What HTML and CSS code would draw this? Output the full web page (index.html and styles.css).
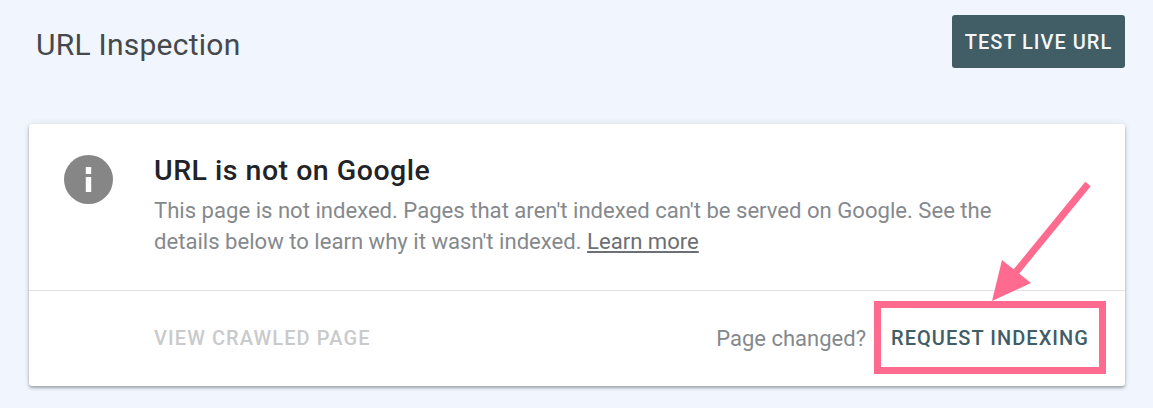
FILE: index.html
```html
<!DOCTYPE html>
<html lang="en">
<head>
<meta charset="utf-8">
<title>URL Inspection</title>
<link rel="stylesheet" href="styles.css">
</head>
<body>
<header class="top">
  <h1 class="page-title">URL Inspection</h1>
  <button class="btn-test">TEST LIVE URL</button>
</header>
<section class="card">
  <div class="card-main">
    <svg class="info" viewBox="0 0 50 50" aria-hidden="true">
      <circle cx="25.500" cy="24.500" r="24.500" fill="#868686"/>
      <rect x="22.800" y="12" width="5.400" height="7" fill="#fff"/>
      <rect x="22.800" y="22" width="5.400" height="15" fill="#fff"/>
    </svg>
    <div class="copy">
      <h2 class="heading">URL is not on Google</h2>
      <p class="desc">This page is not indexed. Pages that aren't indexed can't be served on Google. See the details below to learn why it wasn't indexed. <a class="learn" href="#">Learn more</a></p>
    </div>
  </div>
  <div class="card-foot">
    <span class="view">VIEW CRAWLED PAGE</span>
    <div class="foot-right">
      <span class="changed">Page changed?</span>
      <span class="request">REQUEST INDEXING</span>
    </div>
  </div>
  <svg class="arrow" viewBox="0 0 240 140" aria-hidden="true">
    <line x1="214" y1="15" x2="142" y2="103" stroke="#ff6b8e" stroke-width="7"/>
    <polygon points="118,132 128,91 157,114" fill="#ff6b8e"/>
  </svg>
  <div class="highlight"></div>
</section>
</body>
</html>
```
FILE: styles.css
```css
* { box-sizing: border-box; }
html, body { margin: 0; padding: 0; }
body {
  width: 1153px;
  height: 408px;
  overflow: hidden;
  background: #f0f5fe;
  font-family: Roboto, "Liberation Sans", sans-serif;
  padding: 15px 28px 0 29px;
}
.top {
  display: flex;
  justify-content: space-between;
  align-items: flex-start;
  height: 109px;
}
.page-title {
  margin: 11px 0 0 7px;
  font-family: Roboto, sans-serif;
  font-size: 30px;
  line-height: 38px;
  font-weight: 400;
  letter-spacing: 0.25px;
  color: #45484c;
}
.btn-test {
  width: 173px;
  height: 53px;
  padding: 0;
  border: 0;
  border-radius: 3px;
  background: #415d66;
  color: #f4f6f7;
  font-family: Roboto, sans-serif;
  font-size: 20px;
  font-weight: 500;
  letter-spacing: 1px;
}
.card {
  position: relative;
  width: 1096px;
  height: 262px;
  background: #fff;
  border-radius: 3px;
  box-shadow: 0 2px 3px rgba(60, 64, 67, 0.4), 0 0 6px rgba(60, 64, 67, 0.12);
}
.card-main {
  display: flex;
  height: 167px;
  padding: 31px 0 0 34px;
  border-bottom: 1px solid #e1e2e4;
}
.info {
  width: 50px;
  height: 50px;
  flex: none;
}
.copy {
  margin-left: 41px;
  width: 860px;
}
.heading {
  margin: 0;
  font-size: 28.5px;
  line-height: 32px;
  font-weight: 500;
  letter-spacing: 0.5px;
  color: #212327;
}
.desc {
  margin: 8px 0 0;
  font-size: 22.1px;
  line-height: 31px;
  color: #85898d;
}
.learn {
  color: #6c7074;
  text-decoration: underline;
}
.card-foot {
  display: flex;
  justify-content: space-between;
  align-items: center;
  height: 94px;
  padding: 0 36px 0 125px;
}
.view {
  font-size: 20px;
  font-weight: 500;
  letter-spacing: 1.1px;
  color: #c9cacb;
}
.foot-right {
  display: flex;
  align-items: center;
  gap: 25px;
}
.changed {
  font-size: 22px;
  color: #85898d;
}
.request {
  font-size: 20px;
  font-weight: 500;
  letter-spacing: 1.05px;
  color: #415d66;
}
.arrow {
  position: absolute;
  left: 845px;
  top: 45px;
  width: 240px;
  height: 140px;
}
.highlight {
  position: absolute;
  left: 845px;
  top: 177px;
  width: 232px;
  height: 73px;
  border: 7px solid #ff6b8e;
}
```
